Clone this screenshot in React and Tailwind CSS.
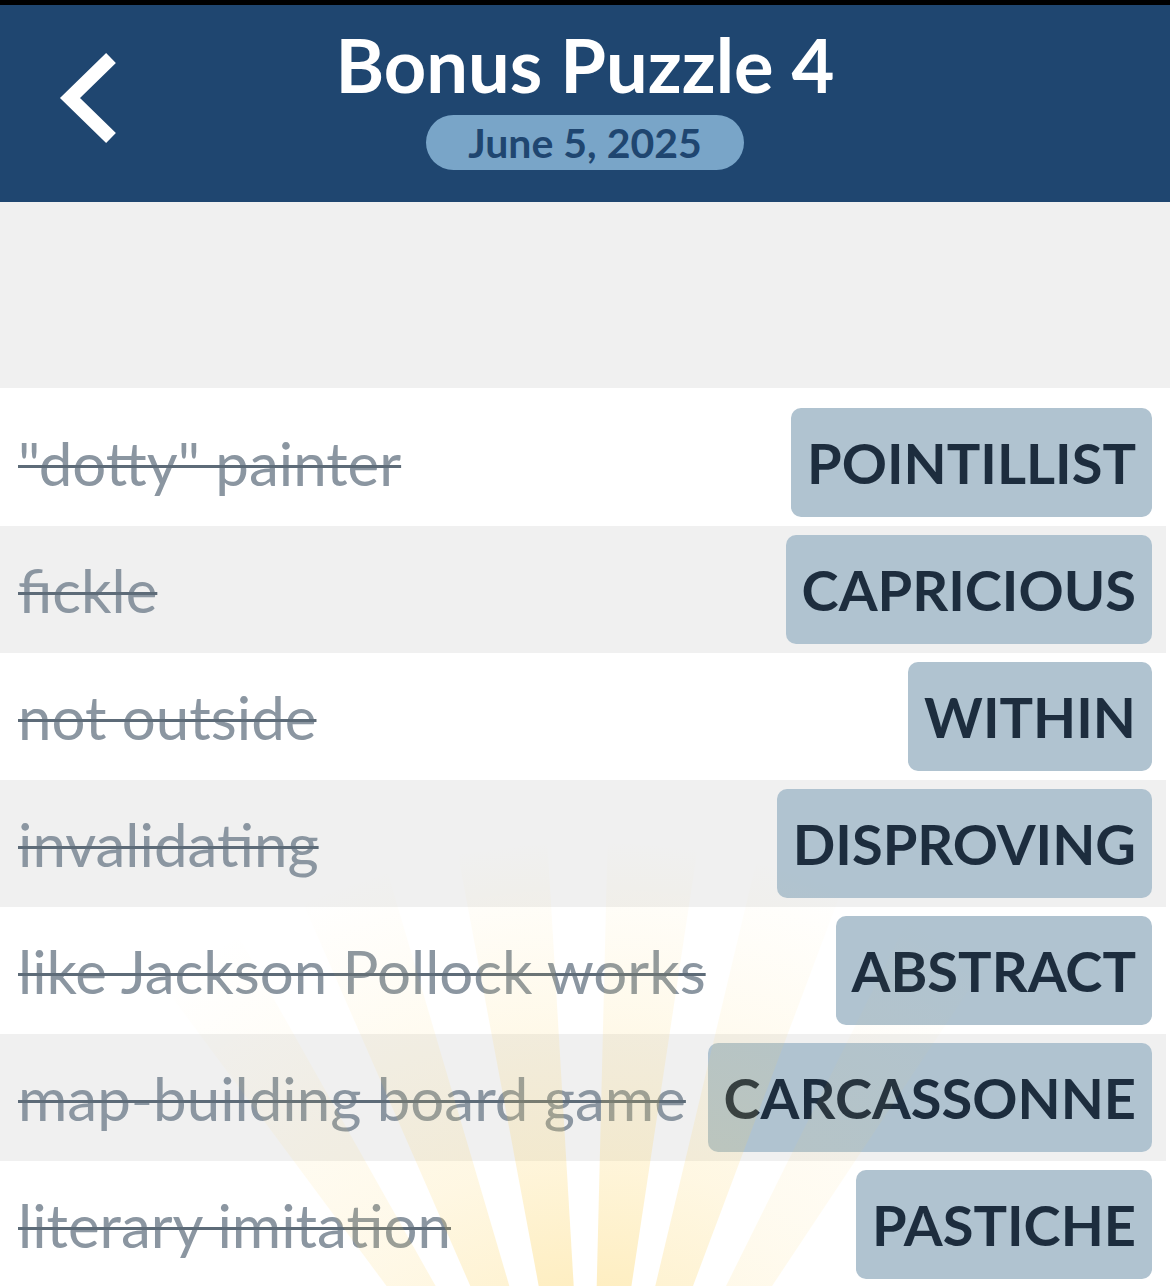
import React from "react";

const clues = [
  { clue: '"dotty" painter', answer: "POINTILLIST" },
  { clue: "fickle", answer: "CAPRICIOUS" },
  { clue: "not outside", answer: "WITHIN" },
  { clue: "invalidating", answer: "DISPROVING" },
  { clue: "like Jackson Pollock works", answer: "ABSTRACT" },
  { clue: "map-building board game", answer: "CARCASSONNE" },
  { clue: "literary imitation", answer: "PASTICHE" },
];

const rayList = [
  { a: -33, o: 0.55 },
  { a: -20, o: 0.75 },
  { a: -7, o: 1 },
  { a: 5, o: 1 },
  { a: 17, o: 0.75 },
  { a: 30, o: 0.4 },
];

function Sunburst() {
  const cx = 590;
  const cy = 1560;
  const pts = (a) => {
    const half = 3.6;
    const r = 900;
    const p1 = ((a - half - 90) * Math.PI) / 180;
    const p2 = ((a + half - 90) * Math.PI) / 180;
    return `${cx},${cy} ${cx + r * Math.cos(p1)},${cy + r * Math.sin(p1)} ${cx + r * Math.cos(p2)},${cy + r * Math.sin(p2)}`;
  };
  return (
    <svg className="pointer-events-none absolute left-0 top-0" width="1170" height="1286" viewBox="0 0 1170 1286">
      <defs>
        <radialGradient id="ray" gradientUnits="userSpaceOnUse" cx={cx} cy={cy} r="720">
          <stop offset="0.3" stopColor="#fcd054" stopOpacity="0.42" />
          <stop offset="0.55" stopColor="#fcd054" stopOpacity="0.22" />
          <stop offset="1" stopColor="#fcd054" stopOpacity="0" />
        </radialGradient>
      </defs>
      <g fill="url(#ray)">
        {rayList.map((r, i) => (
          <polygon key={i} points={pts(r.a)} opacity={r.o} />
        ))}
      </g>
    </svg>
  );
}

function Row({ clue, answer, index }) {
  const first = index === 0;
  return (
    <div
      className={`flex items-center justify-between pl-[18px] pr-[14px] ${
        index % 2 === 0 ? "bg-white" : "bg-[#f0f0f0]"
      } ${first ? "h-[138px] pt-[11px]" : "h-[127px]"}`}
    >
      <span className="whitespace-nowrap text-[60px] leading-none text-[#8b96a1] line-through decoration-[#5d6b78] decoration-[3px]">
        {clue}
      </span>
      <div className="flex h-[109px] items-center rounded-[10px] bg-[#b0c3d0] px-[16px] text-[56px] font-bold leading-none text-[#1d2d3e]">
        {answer}
      </div>
    </div>
  );
}

export default function App() {
  return (
    <div className="relative min-h-[1286px] overflow-hidden bg-white font-['Lato','Liberation_Sans',sans-serif]">
      <div className="h-[5px] bg-black" />
      <header className="relative flex h-[197px] flex-col items-center bg-[#1f4670] pt-[23px]">
        <button className="absolute left-[56px] top-[46px]">
          <svg width="66" height="94" viewBox="0 0 66 94">
            <polyline points="55,7 14,47 55,87" fill="none" stroke="#fff" strokeWidth="14" strokeLinejoin="miter" />
          </svg>
        </button>
        <h1 className="text-[74px] font-bold leading-none text-white">Bonus Puzzle 4</h1>
        <div className="mt-[13px] flex h-[55px] w-[318px] items-center justify-center rounded-full bg-[#79a5c8] text-[41px] font-bold leading-none text-[#1f4670]">
          June 5, 2025
        </div>
      </header>
      <div className="h-[186px] bg-[#f0f0f0]" />
      <div className="mr-[4px]">
        {clues.map((c, i) => (
          <Row key={c.answer} index={i} {...c} />
        ))}
      </div>
      <Sunburst />
    </div>
  );
}
